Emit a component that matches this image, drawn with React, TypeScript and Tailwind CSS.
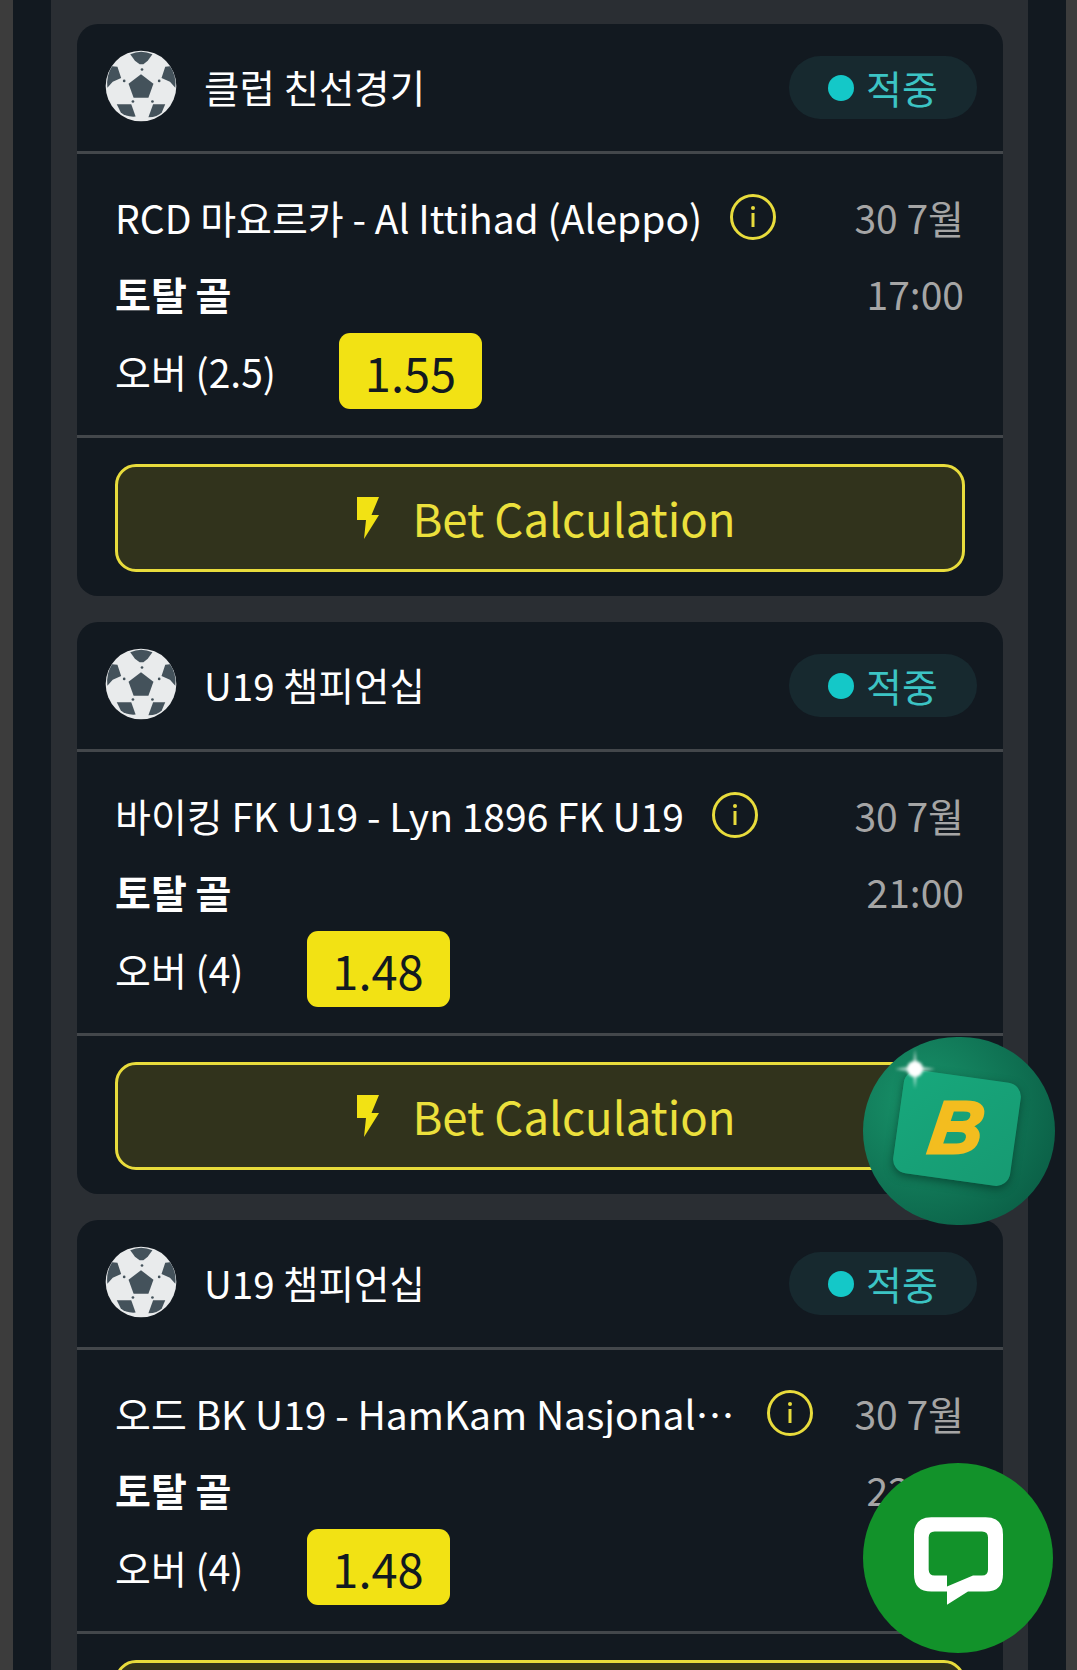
import React from "react";

const font = { fontFamily: '"Noto Sans CJK KR", "Noto Sans", sans-serif' };

function Ball() {
  return (
    <svg width="72" height="72" viewBox="43 30 214 214" className="mb-[4px] shrink-0">
      <circle cx="150" cy="137" r="105" fill="#e9ebec" />
      <g fill="#44525b">
        <path d="M150 102 187 130 172 172 128 172 113 130Z" />
        <path d="M118 43Q150 28 184 43L170 62 157 72H146L132 62Z" />
        <path d="M64 78 80 80 91 113 66 124 50 142Q46 106 64 78Z" />
        <path d="M236 78 222 80 211 113 236 124 252 142Q256 106 236 78Z" />
        <path d="M78 191 121 191 134 228Q105 230 90 216Z" />
        <path d="M222 191 186 191 172 230Q200 230 212 215Z" />
        <circle cx="153" cy="88" r="4" />
        <circle cx="100" cy="122" r="4" />
        <circle cx="204" cy="122" r="4" />
        <circle cx="126" cy="183" r="4" />
        <circle cx="184" cy="183" r="4" />
      </g>
    </svg>
  );
}

function InfoIcon() {
  return (
    <svg width="46" height="46" viewBox="0 0 46 46" className="shrink-0">
      <circle cx="23" cy="23" r="21.5" fill="none" stroke="#e8dc3c" strokeWidth="3" />
      <circle cx="23" cy="14" r="2" fill="#e8dc3c" />
      <rect x="21.5" y="19" width="3" height="14" fill="#e8dc3c" />
    </svg>
  );
}

function Bolt() {
  return (
    <svg width="22" height="42" viewBox="0 0 22 42" className="shrink-0">
      <path d="M0 0H22L14.5 18H22L7 42 9 23H0Z" fill="#f2e214" />
    </svg>
  );
}

type Match = { league: string; title: string; market: string; odds: string; time: string };

function MatchCard({ m }: { m: Match }) {
  return (
    <div className="rounded-[21px] bg-[#121920] text-white">
      <div className="flex h-[130px] items-center justify-between border-b-[3px] border-[#43474b] pl-[28px] pr-[26px]">
        <div className="flex items-center gap-[27px]">
          <Ball />
          <span className="mb-[2px] text-[38.5px] leading-none">{m.league}</span>
        </div>
        <div className="flex h-[63px] w-[188px] items-center justify-center gap-[12px] rounded-full bg-[#17292f]">
          <span className="h-[26px] w-[26px] rounded-full bg-[#14c8c8]" />
          <span className="text-[39px] leading-none text-[#3cc4c4]">적중</span>
        </div>
      </div>
      <div className="flex h-[284px] items-start justify-between gap-[41px] border-b-[3px] border-[#43474b] pl-[38px] pr-[39px] pt-[38px]">
        <div className="flex min-w-0 flex-1 flex-col">
          <div className="flex h-[50px] items-center gap-[28px]">
            <span className="min-w-0 truncate text-[39px] leading-[50px]">{m.title}</span>
            <InfoIcon />
          </div>
          <div className="mt-[26px] text-[39px] font-bold leading-[50px]">토탈 골</div>
          <div className="mt-[15px] flex items-center gap-[63px]">
            <span className="text-[39px] leading-[50px]">{m.market}</span>
            <span className="flex h-[76px] w-[143px] items-center justify-center rounded-[11px] bg-[#f2e214] text-[47px] leading-none text-[#121920]">
              {m.odds}
            </span>
          </div>
        </div>
        <div className="flex shrink-0 flex-col items-end text-[39px] text-[#a5a5a5]">
          <div className="leading-[50px]">30 7월</div>
          <div className="mt-[26px] leading-[50px]">{m.time}</div>
        </div>
      </div>
      <div className="px-[38px] pb-[24px] pt-[26px]">
        <div className="flex h-[108px] items-center justify-center gap-[33px] rounded-[21px] border-[3px] border-[#e8dc3c] bg-[#31331c] pl-[13px]">
          <Bolt />
          <span className="text-[45.5px] leading-none text-[#ece03c]">Bet Calculation</span>
        </div>
      </div>
    </div>
  );
}

const matches: Match[] = [
  { league: "클럽 친선경기", title: "RCD 마요르카 - Al Ittihad (Aleppo)", market: "오버 (2.5)", odds: "1.55", time: "17:00" },
  { league: "U19 챔피언십", title: "바이킹 FK U19 - Lyn 1896 FK U19", market: "오버 (4)", odds: "1.48", time: "21:00" },
  { league: "U19 챔피언십", title: "오드 BK U19 - HamKam Nasjonalt U19", market: "오버 (4)", odds: "1.48", time: "22:00" },
];

export default function App() {
  return (
    <div style={font} className="relative h-[1670px] w-[1077px] overflow-hidden bg-[#3c3c3c] pl-[13px] pr-[11px]">
      <div className="h-full overflow-hidden bg-[#121920] px-[38px]">
        <div className="mt-[-20px] flex flex-col gap-[26px] rounded-[21px] bg-[#2a2e33] pb-[44px] pl-[26px] pr-[25px] pt-[44px]">
          {matches.map((m, i) => (
            <MatchCard key={i} m={m} />
          ))}
        </div>
      </div>

      <div className="absolute left-[863px] top-[1037px] h-[188px] w-[192px] overflow-hidden rounded-full bg-[radial-gradient(circle_at_30%_35%,#18936a,#0a5c44_88%)]">
        <div className="absolute left-[35px] top-[39px] flex h-[104px] w-[118px] rotate-[8deg] items-center justify-center rounded-[14px] bg-[linear-gradient(135deg,#17a87c,#179a72)] shadow-[0_3px_8px_rgba(0,40,30,0.55)]">
          <span
            style={{ fontFamily: '"Liberation Sans", sans-serif' }}
            className="rotate-[-8deg] skew-x-[-8deg] text-[74px] font-bold italic leading-none text-[#f3bd1f] [-webkit-text-stroke:3px_#f3bd1f]"
          >
            B
          </span>
        </div>
        <svg width="44" height="44" viewBox="0 0 44 44" className="absolute left-[30px] top-[10px] blur-[1.5px]">
          <path d="M22 2 24 19 42 22 24 25 22 42 20 25 2 22 20 19Z" fill="#ffffff" opacity="0.65" />
          <circle cx="22" cy="22" r="8" fill="#ffffff" />
        </svg>
      </div>

      <div className="absolute left-[863px] top-[1463px] flex h-[190px] w-[190px] items-center justify-center rounded-full bg-[#12922a]">
        <svg width="89" height="88" viewBox="283 262 267 263" className="mt-[5px]">
          <path
            fillRule="evenodd"
            fill="#ffffff"
            d="M335 262H498Q550 262 550 314V433Q550 485 498 485H445L382 525V485H335Q283 485 283 433V314Q283 262 335 262ZM345 305Q327 305 327 323V419Q327 437 345 437H382V470L460 437H487Q505 437 505 419V323Q505 305 487 305Z"
          />
        </svg>
      </div>
    </div>
  );
}
